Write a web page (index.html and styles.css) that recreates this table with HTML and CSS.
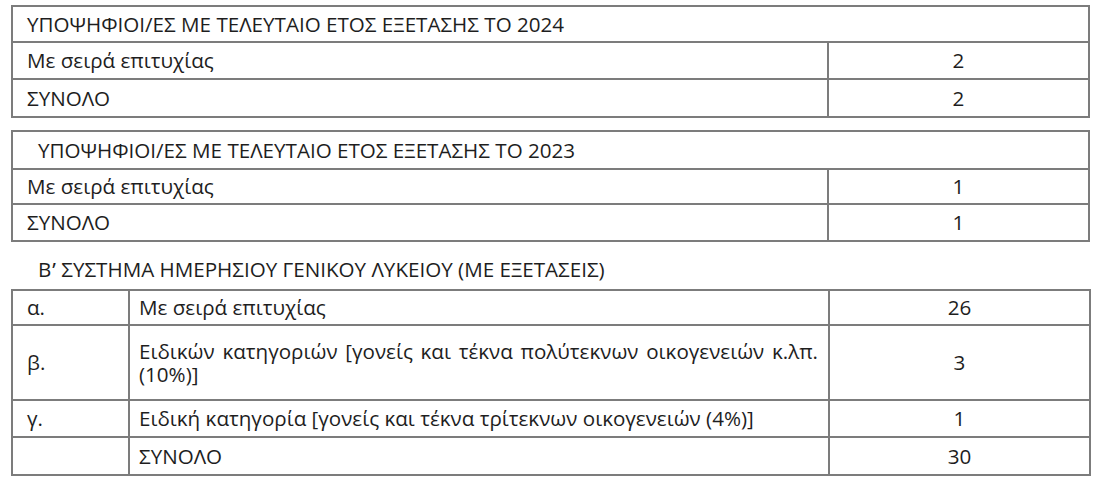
FILE: index.html
```html
<!DOCTYPE html>
<html lang="el">
<head>
<meta charset="utf-8">
<title>Υποψήφιοι</title>
<link rel="stylesheet" href="styles.css">
</head>
<body>
<div class="page">
  <table class="grid two first">
    <colgroup><col class="c-label"><col class="c-value"></colgroup>
    <tr class="h1"><td class="head" colspan="2">ΥΠΟΨΗΦΙΟΙ/ΕΣ ΜΕ ΤΕΛΕΥΤΑΙΟ ΕΤΟΣ ΕΞΕΤΑΣΗΣ ΤΟ 2024</td></tr>
    <tr class="h2"><td>Με σειρά επιτυχίας</td><td class="num">2</td></tr>
    <tr class="h5"><td>ΣΥΝΟΛΟ</td><td class="num">2</td></tr>
  </table>

  <table class="grid two second">
    <colgroup><col class="c-label"><col class="c-value"></colgroup>
    <tr class="h3"><td class="head indent" colspan="2">ΥΠΟΨΗΦΙΟΙ/ΕΣ ΜΕ ΤΕΛΕΥΤΑΙΟ ΕΤΟΣ ΕΞΕΤΑΣΗΣ ΤΟ 2023</td></tr>
    <tr class="h4"><td>Με σειρά επιτυχίας</td><td class="num">1</td></tr>
    <tr class="h2"><td>ΣΥΝΟΛΟ</td><td class="num">1</td></tr>
  </table>

  <p class="caption">Β<span class="keraia">ʹ</span> ΣΥΣΤΗΜΑ ΗΜΕΡΗΣΙΟΥ ΓΕΝΙΚΟΥ ΛΥΚΕΙΟΥ (ΜΕ ΕΞΕΤΑΣΕΙΣ)</p>

  <table class="grid three">
    <colgroup><col class="c-idx"><col class="c-desc"><col class="c-value"></colgroup>
    <tr class="r-a"><td>α.</td><td class="desc">Με σειρά επιτυχίας</td><td class="num">26</td></tr>
    <tr class="r-b"><td>β.</td><td class="desc"><span class="just">Ειδικών κατηγοριών [γονείς και τέκνα πολύτεκνων οικογενειών κ.λπ.</span><span class="line2">(10%)]</span></td><td class="num">3</td></tr>
    <tr class="r-c"><td>γ.</td><td class="desc">Ειδική κατηγορία [γονείς και τέκνα τρίτεκνων οικογενειών (4%)]</td><td class="num">1</td></tr>
    <tr class="r-d"><td></td><td class="desc">ΣΥΝΟΛΟ</td><td class="num">30</td></tr>
  </table>
</div>
</body>
</html>
```

FILE: styles.css
```css
html, body {
  margin: 0;
  padding: 0;
  background: #ffffff;
}

body {
  font-family: "Open Sans", "Noto Sans", sans-serif;
  font-size: 20.6px;
  color: #1e1e1e;
}

.page {
  padding: 5px 14px 0 11px;
  width: 1077px;
}

.grid {
  width: 1077px;
  border-collapse: collapse;
  table-layout: fixed;
}

.grid td {
  border: 2px solid #7c7c7c;
  padding: 0 14px;
  height: 34px;
  line-height: 23px;
  vertical-align: middle;
  white-space: nowrap;
}

.c-label { width: 816px; }
.c-value { width: 261px; }
.c-idx { width: 117px; }
.c-desc { width: 700px; }

.grid td.num {
  text-align: center;
  padding: 0;
}

.grid td.indent {
  padding-left: 25px;
}

.h1 td { height: 34px; }
.h2 td { height: 35px; }
.h3 td { height: 36px; }
.h4 td { height: 33px; }
.h5 td { height: 36px; }

.second {
  margin-top: 12px;
}

.caption {
  margin: 15px 0 0 27px;
  line-height: 24px;
}

.keraia {
  display: inline-block;
  margin-left: 1px;
}

.three {
  margin-top: 8px;
}

.three td.desc {
  padding: 0 10px 0 9px;
  white-space: normal;
}

.three .r-a td { height: 33px; }
.three .r-b td { height: 73px; }
.three .r-c td { height: 35px; }
.three .r-d td { height: 36px; }

.just {
  display: block;
  text-align: justify;
  text-align-last: justify;
}

.line2 {
  display: block;
}
```
